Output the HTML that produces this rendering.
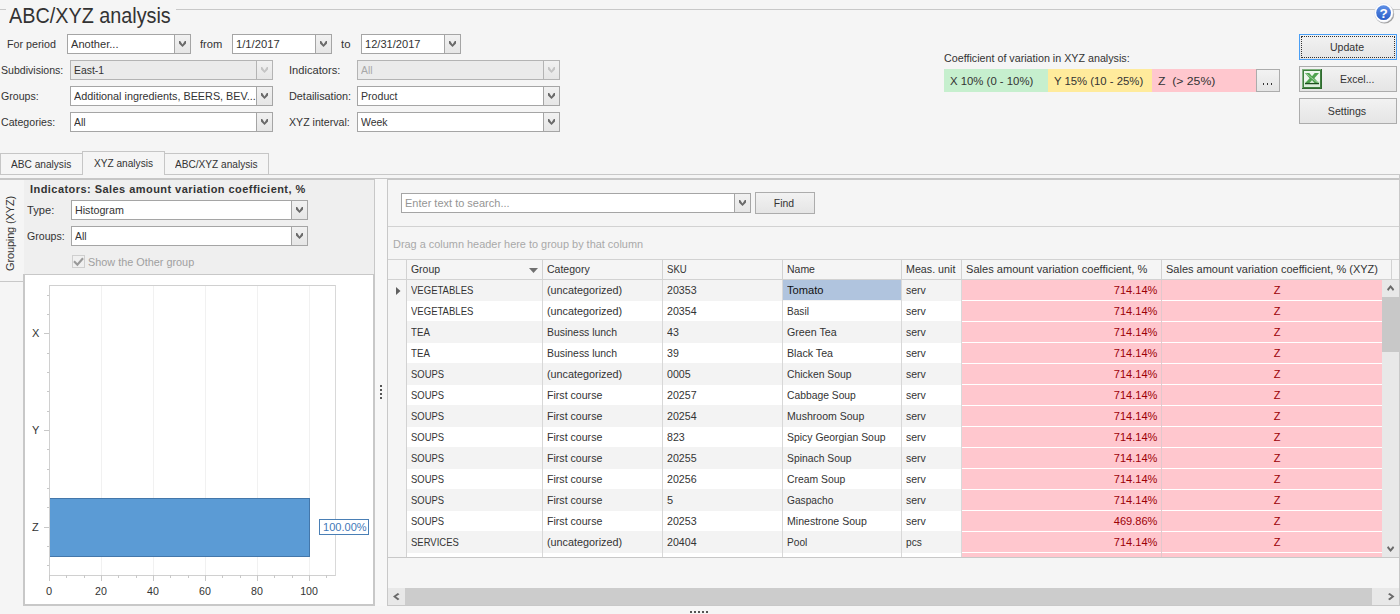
<!DOCTYPE html>
<html><head><meta charset="utf-8"><style>
html,body{margin:0;padding:0;width:1400px;height:614px;overflow:hidden;background:#f5f5f5;position:relative}
body div,body svg{position:absolute}
.t{font-family:'Liberation Sans', sans-serif;font-size:11px;line-height:13px;white-space:nowrap;color:#333;transform-origin:0 0}
</style></head><body>
<div style="left:0px;top:9px;width:6px;height:1px;background:#c8c8c8"></div>
<div style="left:176px;top:9px;width:1224px;height:1px;background:#c8c8c8"></div>
<div class="t" style="left:9px;top:3px;font-size:22px;line-height:26px;transform:scaleX(0.9);transform-origin:0 0;color:#333">ABC/XYZ analysis</div>
<svg style="left:1373px;top:2px" width="22" height="22" viewBox="0 0 22 22">
<defs><linearGradient id="hg" x1="0" y1="0" x2="0" y2="1"><stop offset="0" stop-color="#5d8fe6"/><stop offset="1" stop-color="#2b5fc9"/></linearGradient></defs>
<circle cx="11.6" cy="11.9" r="9.6" fill="rgba(0,0,0,0.35)"/>
<circle cx="10.8" cy="10.8" r="9.4" fill="#fff" stroke="#e0e4ee" stroke-width="0.6"/>
<circle cx="10.6" cy="10.7" r="7.4" fill="url(#hg)"/>
<text x="10.6" y="15.6" text-anchor="middle" font-family="Liberation Sans" font-weight="bold" font-size="13.5" fill="#fff">?</text>
</svg>
<div class="t" style="left:7px;top:38px;transform:scaleX(0.9743);">For period</div>
<div style="left:67px;top:34px;width:124px;height:20px;box-sizing:border-box;border:1px solid #a5a5a5;background:#fff"></div>
<div style="left:174px;top:35px;width:16px;height:18px;box-sizing:border-box;border-left:1px solid #a5a5a5;background:linear-gradient(#f1f1f1,#e6e6e6)"></div>
<svg style="left:179px;top:41px" width="8" height="7" viewBox="0 0 8 7"><path d="M0 0 L1.2 0 L3.5 3.6 L5.8 0 L7 0 L7 2.4 L3.5 6 L0 2.4 Z" fill="#6a6a6a"/></svg>
<div class="t" style="left:71px;top:38px;transform:scaleX(1.0081);color:#333">Another...</div>
<div class="t" style="left:200px;top:38px;transform:scaleX(1.0150);">from</div>
<div style="left:232px;top:34px;width:100px;height:20px;box-sizing:border-box;border:1px solid #a5a5a5;background:#fff"></div>
<div style="left:315px;top:35px;width:16px;height:18px;box-sizing:border-box;border-left:1px solid #a5a5a5;background:linear-gradient(#f1f1f1,#e6e6e6)"></div>
<svg style="left:320px;top:41px" width="8" height="7" viewBox="0 0 8 7"><path d="M0 0 L1.2 0 L3.5 3.6 L5.8 0 L7 0 L7 2.4 L3.5 6 L0 2.4 Z" fill="#6a6a6a"/></svg>
<div class="t" style="left:236px;top:38px;transform:scaleX(1.0204);color:#333">1/1/2017</div>
<div class="t" style="left:341px;top:38px;transform:scaleX(1.0343);">to</div>
<div style="left:361px;top:34px;width:100px;height:20px;box-sizing:border-box;border:1px solid #a5a5a5;background:#fff"></div>
<div style="left:444px;top:35px;width:16px;height:18px;box-sizing:border-box;border-left:1px solid #a5a5a5;background:linear-gradient(#f1f1f1,#e6e6e6)"></div>
<svg style="left:449px;top:41px" width="8" height="7" viewBox="0 0 8 7"><path d="M0 0 L1.2 0 L3.5 3.6 L5.8 0 L7 0 L7 2.4 L3.5 6 L0 2.4 Z" fill="#6a6a6a"/></svg>
<div class="t" style="left:365px;top:38px;transform:scaleX(1.0083);color:#333">12/31/2017</div>
<div class="t" style="left:1px;top:64px;transform:scaleX(0.9613);">Subdivisions:</div>
<div style="left:70px;top:60px;width:203px;height:20px;box-sizing:border-box;border:1px solid #b4b4b4;background:#ebebeb"></div>
<div style="left:256px;top:61px;width:16px;height:18px;box-sizing:border-box;border-left:1px solid #b4b4b4;background:linear-gradient(#f1f1f1,#e6e6e6)"></div>
<svg style="left:261px;top:67px" width="8" height="7" viewBox="0 0 8 7"><path d="M0 0 L1.2 0 L3.5 3.6 L5.8 0 L7 0 L7 2.4 L3.5 6 L0 2.4 Z" fill="#c4c4c4"/></svg>
<div class="t" style="left:74px;top:64px;transform:scaleX(0.9445);color:#333">East-1</div>
<div class="t" style="left:289px;top:64px;transform:scaleX(1.0105);">Indicators:</div>
<div style="left:357px;top:60px;width:203px;height:20px;box-sizing:border-box;border:1px solid #b4b4b4;background:#ebebeb"></div>
<div style="left:543px;top:61px;width:16px;height:18px;box-sizing:border-box;border-left:1px solid #b4b4b4;background:linear-gradient(#f1f1f1,#e6e6e6)"></div>
<svg style="left:548px;top:67px" width="8" height="7" viewBox="0 0 8 7"><path d="M0 0 L1.2 0 L3.5 3.6 L5.8 0 L7 0 L7 2.4 L3.5 6 L0 2.4 Z" fill="#c4c4c4"/></svg>
<div class="t" style="left:361px;top:64px;transform:scaleX(0.9391);color:#a8a8a8">All</div>
<div class="t" style="left:1px;top:90px;transform:scaleX(0.9630);">Groups:</div>
<div style="left:70px;top:86px;width:203px;height:20px;box-sizing:border-box;border:1px solid #a5a5a5;background:#fff"></div>
<div style="left:256px;top:87px;width:16px;height:18px;box-sizing:border-box;border-left:1px solid #a5a5a5;background:linear-gradient(#f1f1f1,#e6e6e6)"></div>
<svg style="left:261px;top:93px" width="8" height="7" viewBox="0 0 8 7"><path d="M0 0 L1.2 0 L3.5 3.6 L5.8 0 L7 0 L7 2.4 L3.5 6 L0 2.4 Z" fill="#6a6a6a"/></svg>
<div class="t" style="left:74px;top:90px;transform:scaleX(0.9832);color:#333">Additional ingredients, BEERS, BEV...</div>
<div class="t" style="left:289px;top:90px;transform:scaleX(0.9867);">Detailisation:</div>
<div style="left:357px;top:86px;width:203px;height:20px;box-sizing:border-box;border:1px solid #a5a5a5;background:#fff"></div>
<div style="left:543px;top:87px;width:16px;height:18px;box-sizing:border-box;border-left:1px solid #a5a5a5;background:linear-gradient(#f1f1f1,#e6e6e6)"></div>
<svg style="left:548px;top:93px" width="8" height="7" viewBox="0 0 8 7"><path d="M0 0 L1.2 0 L3.5 3.6 L5.8 0 L7 0 L7 2.4 L3.5 6 L0 2.4 Z" fill="#6a6a6a"/></svg>
<div class="t" style="left:361px;top:90px;transform:scaleX(0.9633);color:#333">Product</div>
<div class="t" style="left:1px;top:116px;transform:scaleX(0.9622);">Categories:</div>
<div style="left:70px;top:112px;width:203px;height:20px;box-sizing:border-box;border:1px solid #a5a5a5;background:#fff"></div>
<div style="left:256px;top:113px;width:16px;height:18px;box-sizing:border-box;border-left:1px solid #a5a5a5;background:linear-gradient(#f1f1f1,#e6e6e6)"></div>
<svg style="left:261px;top:119px" width="8" height="7" viewBox="0 0 8 7"><path d="M0 0 L1.2 0 L3.5 3.6 L5.8 0 L7 0 L7 2.4 L3.5 6 L0 2.4 Z" fill="#6a6a6a"/></svg>
<div class="t" style="left:74px;top:116px;transform:scaleX(0.9391);color:#333">All</div>
<div class="t" style="left:289px;top:116px;transform:scaleX(0.9638);">XYZ interval:</div>
<div style="left:357px;top:112px;width:203px;height:20px;box-sizing:border-box;border:1px solid #a5a5a5;background:#fff"></div>
<div style="left:543px;top:113px;width:16px;height:18px;box-sizing:border-box;border-left:1px solid #a5a5a5;background:linear-gradient(#f1f1f1,#e6e6e6)"></div>
<svg style="left:548px;top:119px" width="8" height="7" viewBox="0 0 8 7"><path d="M0 0 L1.2 0 L3.5 3.6 L5.8 0 L7 0 L7 2.4 L3.5 6 L0 2.4 Z" fill="#6a6a6a"/></svg>
<div class="t" style="left:361px;top:116px;transform:scaleX(0.9507);color:#333">Week</div>
<div class="t" style="left:944px;top:52px;transform:scaleX(0.9743);">Coefficient of variation in XYZ analysis:</div>
<div style="left:944px;top:69px;width:104px;height:23px;background:#c6efce"></div>
<div style="left:1048px;top:69px;width:104px;height:23px;background:#ffeb9c"></div>
<div style="left:1152px;top:69px;width:104px;height:23px;background:#ffc7ce"></div>
<div class="t" style="left:950px;top:75px;transform:scaleX(1.0321);">X 10% (0 - 10%)</div>
<div class="t" style="left:1054px;top:75px;transform:scaleX(1.0292);">Y 15% (10 - 25%)</div>
<div class="t" style="left:1158px;top:75px;transform:scaleX(1.1093);">Z &nbsp;(&gt; 25%)</div>
<div style="left:1256px;top:69px;width:24px;height:23px;box-sizing:border-box;border:1px solid #acacac;background:linear-gradient(#f2f2f2,#e5e5e5)"></div>
<div class="t" style="left:1255px;width:24px;text-align:center;top:74px;transform-origin:50% 0;"></div>
<div style="left:1263px;top:83px;width:1px;height:2px;background:#333"></div>
<div style="left:1267px;top:83px;width:1px;height:2px;background:#333"></div>
<div style="left:1271px;top:83px;width:1px;height:2px;background:#333"></div>
<div style="left:1299px;top:34px;width:98px;height:26px;box-sizing:border-box;border:1px solid #4a9ff5;background:linear-gradient(#f2f2f2,#e5e5e5)"></div>
<div style="left:1301px;top:36px;width:94px;height:22px;box-sizing:border-box;border:1px dotted #333"></div>
<div class="t" style="left:1298px;width:98px;text-align:center;top:41px;transform-origin:50% 0;transform:scaleX(0.9632);">Update</div>
<div style="left:1299px;top:66px;width:98px;height:26px;box-sizing:border-box;border:1px solid #acacac;background:linear-gradient(#f2f2f2,#e5e5e5)"></div>
<div class="t" style="left:1340px;top:73px;transform:scaleX(0.9528);">Excel...</div>
<div style="left:1299px;top:98px;width:98px;height:26px;box-sizing:border-box;border:1px solid #acacac;background:linear-gradient(#f2f2f2,#e5e5e5)"></div>
<div class="t" style="left:1298px;width:98px;text-align:center;top:105px;transform-origin:50% 0;transform:scaleX(0.9634);">Settings</div>
<svg style="left:1302px;top:69px" width="20" height="20" viewBox="0 0 20 20">
<rect x="0" y="0" width="20" height="20" fill="#2f6a2f"/>
<rect x="0" y="0" width="19" height="19" fill="#7fb27f"/>
<rect x="1" y="1" width="18" height="18" fill="#3f7f3f"/>
<rect x="2" y="2" width="16" height="16" fill="#eef6ee"/>
<rect x="2" y="12" width="16" height="6" fill="#dcefdc"/>
<path d="M3 4 L7.3 4 L10 7.3 L12.7 4 L17 4 L12.4 9.3 L17 14.3 L12.7 14.3 L10 11.3 L7.3 14.3 L3 14.3 L7.6 9.3 Z" fill="#4fa34f"/>
<path d="M3 14.6 L17 14.6" stroke="#1d4f1d" stroke-width="1.3"/>
<path d="M4.2 4.6 L15.6 13.6" stroke="#b5ddb5" stroke-width="0.8"/>
</svg>
<div style="left:0px;top:178px;width:1400px;height:1px;background:#c6c6c6"></div>
<div style="left:0px;top:179px;width:375px;height:1px;background:#c6c6c6"></div>
<div style="left:387px;top:179px;width:1013px;height:1px;background:#c6c6c6"></div>
<div style="left:0px;top:174px;width:1400px;height:1px;background:#c8c8c8"></div>
<div style="left:1399px;top:174px;width:1px;height:432px;background:#c8c8c8"></div>
<div style="left:0px;top:153px;width:83px;height:22px;box-sizing:border-box;border:1px solid #c6c6c6;background:#f5f5f5"></div>
<div style="left:164px;top:153px;width:105px;height:22px;box-sizing:border-box;border:1px solid #c6c6c6;background:#f5f5f5"></div>
<div style="left:82px;top:151px;width:83px;height:24px;box-sizing:border-box;border:1px solid #c6c6c6;border-bottom:none;background:#f5f5f5"></div>
<div class="t" style="left:11px;top:158px;transform:scaleX(0.9209);">ABC analysis</div>
<div class="t" style="left:94px;top:157px;transform:scaleX(0.9190);">XYZ analysis</div>
<div class="t" style="left:175px;top:158px;transform:scaleX(0.9184);">ABC/XYZ analysis</div>
<div style="left:24px;top:180px;width:350px;height:94px;background:#efefef"></div>
<div style="left:0px;top:281px;width:23px;height:1px;background:#c8c8c8"></div>
<div class="t" style="left:-35px;top:227px;width:90px;text-align:center;letter-spacing:-0.15px;transform:rotate(-90deg);transform-origin:50% 50%;">Grouping (XYZ)</div>
<div class="t" style="left:30px;top:183px;font-weight:bold;letter-spacing:0.45px">Indicators: Sales amount variation coefficient, %</div>
<div class="t" style="left:27px;top:204px;transform:scaleX(1.0118);">Type:</div>
<div style="left:71px;top:200px;width:237px;height:20px;box-sizing:border-box;border:1px solid #a5a5a5;background:#fff"></div>
<div style="left:291px;top:201px;width:16px;height:18px;box-sizing:border-box;border-left:1px solid #a5a5a5;background:linear-gradient(#f1f1f1,#e6e6e6)"></div>
<svg style="left:296px;top:207px" width="8" height="7" viewBox="0 0 8 7"><path d="M0 0 L1.2 0 L3.5 3.6 L5.8 0 L7 0 L7 2.4 L3.5 6 L0 2.4 Z" fill="#6a6a6a"/></svg>
<div class="t" style="left:75px;top:204px;transform:scaleX(0.9742);color:#333">Histogram</div>
<div class="t" style="left:27px;top:230px;transform:scaleX(0.9630);">Groups:</div>
<div style="left:71px;top:226px;width:237px;height:20px;box-sizing:border-box;border:1px solid #a5a5a5;background:#fff"></div>
<div style="left:291px;top:227px;width:16px;height:18px;box-sizing:border-box;border-left:1px solid #a5a5a5;background:linear-gradient(#f1f1f1,#e6e6e6)"></div>
<svg style="left:296px;top:233px" width="8" height="7" viewBox="0 0 8 7"><path d="M0 0 L1.2 0 L3.5 3.6 L5.8 0 L7 0 L7 2.4 L3.5 6 L0 2.4 Z" fill="#6a6a6a"/></svg>
<div class="t" style="left:75px;top:230px;transform:scaleX(0.9391);color:#333">All</div>
<div style="left:72px;top:255px;width:13px;height:13px;box-sizing:border-box;border:1px solid #cfcfcf;background:#f0f0f0"></div>
<svg style="left:73px;top:256px" width="11" height="11" viewBox="0 0 11 11"><path d="M1 5.2 L4.4 8.8 L10 2.2" stroke="#9a9a9a" stroke-width="2.1" fill="none"/></svg>
<div class="t" style="left:88px;top:256px;transform:scaleX(0.9865);color:#a0a0a0">Show the Other group</div>
<div style="left:23px;top:274px;width:352px;height:332px;box-sizing:border-box;border:1px solid #c8c8c8;border-left:2px solid #c8c8c8;border-bottom:2px solid #c8c8c8;border-right:2px solid #c8c8c8;background:#fff"></div>
<div style="left:49px;top:285px;width:287px;height:291px;box-sizing:border-box;border:1px solid #d0d0d0;border-right:1px solid #d9d9d9"></div>
<div style="left:101px;top:286px;width:1px;height:289px;background:#f1f1f1"></div>
<div style="left:153px;top:286px;width:1px;height:289px;background:#f1f1f1"></div>
<div style="left:205px;top:286px;width:1px;height:289px;background:#f1f1f1"></div>
<div style="left:257px;top:286px;width:1px;height:289px;background:#f1f1f1"></div>
<div style="left:309px;top:286px;width:1px;height:289px;background:#f1f1f1"></div>
<div style="left:47px;top:295px;width:2px;height:1px;background:#c8c8c8"></div>
<div style="left:47px;top:314px;width:2px;height:1px;background:#c8c8c8"></div>
<div style="left:44px;top:333px;width:5px;height:1px;background:#c8c8c8"></div>
<div style="left:47px;top:353px;width:2px;height:1px;background:#c8c8c8"></div>
<div style="left:47px;top:372px;width:2px;height:1px;background:#c8c8c8"></div>
<div style="left:47px;top:391px;width:2px;height:1px;background:#c8c8c8"></div>
<div style="left:47px;top:411px;width:2px;height:1px;background:#c8c8c8"></div>
<div style="left:44px;top:430px;width:5px;height:1px;background:#c8c8c8"></div>
<div style="left:47px;top:449px;width:2px;height:1px;background:#c8c8c8"></div>
<div style="left:47px;top:469px;width:2px;height:1px;background:#c8c8c8"></div>
<div style="left:47px;top:488px;width:2px;height:1px;background:#c8c8c8"></div>
<div style="left:47px;top:507px;width:2px;height:1px;background:#c8c8c8"></div>
<div style="left:44px;top:527px;width:5px;height:1px;background:#c8c8c8"></div>
<div style="left:47px;top:546px;width:2px;height:1px;background:#c8c8c8"></div>
<div style="left:47px;top:565px;width:2px;height:1px;background:#c8c8c8"></div>
<div class="t" style="left:32px;top:327px;">X</div>
<div class="t" style="left:32px;top:424px;">Y</div>
<div class="t" style="left:32px;top:521px;">Z</div>
<div style="left:49px;top:575px;width:1px;height:6px;background:#c8c8c8"></div>
<div style="left:66px;top:575px;width:1px;height:3px;background:#c8c8c8"></div>
<div style="left:84px;top:575px;width:1px;height:3px;background:#c8c8c8"></div>
<div style="left:101px;top:575px;width:1px;height:6px;background:#c8c8c8"></div>
<div style="left:118px;top:575px;width:1px;height:3px;background:#c8c8c8"></div>
<div style="left:136px;top:575px;width:1px;height:3px;background:#c8c8c8"></div>
<div style="left:153px;top:575px;width:1px;height:6px;background:#c8c8c8"></div>
<div style="left:170px;top:575px;width:1px;height:3px;background:#c8c8c8"></div>
<div style="left:188px;top:575px;width:1px;height:3px;background:#c8c8c8"></div>
<div style="left:205px;top:575px;width:1px;height:6px;background:#c8c8c8"></div>
<div style="left:222px;top:575px;width:1px;height:3px;background:#c8c8c8"></div>
<div style="left:240px;top:575px;width:1px;height:3px;background:#c8c8c8"></div>
<div style="left:257px;top:575px;width:1px;height:6px;background:#c8c8c8"></div>
<div style="left:274px;top:575px;width:1px;height:3px;background:#c8c8c8"></div>
<div style="left:292px;top:575px;width:1px;height:3px;background:#c8c8c8"></div>
<div style="left:309px;top:575px;width:1px;height:6px;background:#c8c8c8"></div>
<div style="left:326px;top:575px;width:1px;height:3px;background:#c8c8c8"></div>
<div class="t" style="left:29px;width:40px;text-align:center;top:585px;transform-origin:50% 0;">0</div>
<div class="t" style="left:81px;width:40px;text-align:center;top:585px;transform-origin:50% 0;transform:scaleX(0.9659);">20</div>
<div class="t" style="left:133px;width:40px;text-align:center;top:585px;transform-origin:50% 0;transform:scaleX(0.9659);">40</div>
<div class="t" style="left:185px;width:40px;text-align:center;top:585px;transform-origin:50% 0;transform:scaleX(0.9659);">60</div>
<div class="t" style="left:237px;width:40px;text-align:center;top:585px;transform-origin:50% 0;transform:scaleX(0.9659);">80</div>
<div class="t" style="left:289px;width:40px;text-align:center;top:585px;transform-origin:50% 0;transform:scaleX(0.9659);">100</div>
<div style="left:50px;top:498px;width:260px;height:59px;box-sizing:border-box;border:1px solid #4477aa;border-left:none;background:#5b9bd5"></div>
<div style="left:319px;top:519px;width:50px;height:16px;box-sizing:border-box;border:1px solid #4a7fb5;background:#fff"></div>
<div class="t" style="left:323px;top:521px;transform:scaleX(1.0050);color:#3f78b8">100.00%</div>
<div style="left:375px;top:179px;width:12px;height:427px;background:#f7f7f7"></div>
<div style="left:374px;top:180px;width:1px;height:426px;background:#c8c8c8"></div>
<div style="left:387px;top:180px;width:1px;height:426px;background:#c8c8c8"></div>
<div style="left:380px;top:385px;width:2px;height:2px;background:#555"></div>
<div style="left:380px;top:389px;width:2px;height:2px;background:#555"></div>
<div style="left:380px;top:393px;width:2px;height:2px;background:#555"></div>
<div style="left:380px;top:397px;width:2px;height:2px;background:#555"></div>
<div style="left:1399px;top:180px;width:1px;height:426px;background:#c8c8c8"></div>
<div style="left:387px;top:605px;width:1013px;height:1px;background:#c8c8c8"></div>
<div style="left:401px;top:193px;width:350px;height:20px;box-sizing:border-box;border:1px solid #a5a5a5;background:#fff"></div>
<div style="left:734px;top:194px;width:16px;height:18px;box-sizing:border-box;border-left:1px solid #a5a5a5;background:linear-gradient(#f1f1f1,#e6e6e6)"></div>
<svg style="left:739px;top:200px" width="8" height="7" viewBox="0 0 8 7"><path d="M0 0 L1.2 0 L3.5 3.6 L5.8 0 L7 0 L7 2.4 L3.5 6 L0 2.4 Z" fill="#6a6a6a"/></svg>
<div class="t" style="left:405px;top:197px;color:#959595">Enter text to search...</div>
<div style="left:755px;top:192px;width:60px;height:22px;box-sizing:border-box;border:1px solid #acacac;background:linear-gradient(#f2f2f2,#e5e5e5)"></div>
<div class="t" style="left:754px;width:60px;text-align:center;top:197px;transform-origin:50% 0;transform:scaleX(0.9465);">Find</div>
<div style="left:388px;top:226px;width:1011px;height:1px;background:#d2d2d2"></div>
<div class="t" style="left:393px;top:238px;transform:scaleX(0.9926);color:#a9a9a9">Drag a column header here to group by that column</div>
<div style="left:388px;top:259px;width:1011px;height:1px;background:#d2d2d2"></div>
<div style="left:388px;top:279px;width:1011px;height:1px;background:#d2d2d2"></div>
<div style="left:406px;top:260px;width:1px;height:19px;background:#d2d2d2"></div>
<div style="left:542px;top:260px;width:1px;height:19px;background:#d2d2d2"></div>
<div style="left:662px;top:260px;width:1px;height:19px;background:#d2d2d2"></div>
<div style="left:782px;top:260px;width:1px;height:19px;background:#d2d2d2"></div>
<div style="left:901px;top:260px;width:1px;height:19px;background:#d2d2d2"></div>
<div style="left:961px;top:260px;width:1px;height:19px;background:#d2d2d2"></div>
<div style="left:1161px;top:260px;width:1px;height:19px;background:#d2d2d2"></div>
<div style="left:1391px;top:260px;width:1px;height:19px;background:#d2d2d2"></div>
<div class="t" style="left:411px;top:263px;transform:scaleX(0.9491);">Group</div>
<div class="t" style="left:547px;top:263px;transform:scaleX(0.9562);">Category</div>
<div class="t" style="left:667px;top:263px;transform:scaleX(0.8725);">SKU</div>
<div class="t" style="left:787px;top:263px;transform:scaleX(0.9512);">Name</div>
<div class="t" style="left:906px;top:263px;transform:scaleX(0.9729);">Meas. unit</div>
<div class="t" style="left:966px;top:263px;transform:scaleX(1.0064);">Sales amount variation coefficient, %</div>
<div class="t" style="left:1166px;top:263px;">Sales amount variation coefficient, % (XYZ)</div>
<svg style="left:529px;top:268px" width="9" height="5" viewBox="0 0 9 5"><path d="M0 0 L9 0 L4.5 5 Z" fill="#707070"/></svg>
<div style="left:388px;top:280px;width:18px;height:277px;background:#f5f5f5"></div>
<div style="left:406px;top:280px;width:1px;height:277px;background:#d2d2d2"></div>
<div style="left:407px;top:280px;width:555px;height:21px;background:#f3f3f3"></div>
<div style="left:962px;top:280px;width:420px;height:20px;background:#ffc7ce"></div>
<div style="left:962px;top:300px;width:420px;height:1px;background:#fff"></div>
<div style="left:542px;top:280px;width:1px;height:21px;background:#d8d8d8"></div>
<div style="left:662px;top:280px;width:1px;height:21px;background:#d8d8d8"></div>
<div style="left:782px;top:280px;width:1px;height:21px;background:#d8d8d8"></div>
<div style="left:901px;top:280px;width:1px;height:21px;background:#d8d8d8"></div>
<div style="left:961px;top:280px;width:1px;height:21px;background:#d8d8d8"></div>
<div style="left:1161px;top:280px;width:1px;height:21px;background:#e2c8cc"></div>
<div class="t" style="left:411px;top:284px;transform:scaleX(0.8671);">VEGETABLES</div>
<div class="t" style="left:547px;top:284px;transform:scaleX(0.9828);">(uncategorized)</div>
<div class="t" style="left:667px;top:284px;transform:scaleX(0.9659);">20353</div>
<div class="t" style="left:787px;top:284px;transform:scaleX(1.0110);">Tomato</div>
<div class="t" style="left:906px;top:284px;transform:scaleX(0.9541);">serv</div>
<div class="t" style="right:243px;top:284px;transform-origin:100% 0;transform:scaleX(1.0050);color:#9c0006">714.14%</div>
<div class="t" style="left:1257px;width:40px;text-align:center;top:284px;transform-origin:50% 0;color:#9c0006">Z</div>
<div style="left:407px;top:301px;width:555px;height:21px;background:#f3f3f3"></div>
<div style="left:407px;top:301px;width:555px;height:20px;background:#ffffff"></div>
<div style="left:962px;top:301px;width:420px;height:20px;background:#ffc7ce"></div>
<div style="left:962px;top:321px;width:420px;height:1px;background:#fff"></div>
<div style="left:542px;top:301px;width:1px;height:21px;background:#d8d8d8"></div>
<div style="left:662px;top:301px;width:1px;height:21px;background:#d8d8d8"></div>
<div style="left:782px;top:301px;width:1px;height:21px;background:#d8d8d8"></div>
<div style="left:901px;top:301px;width:1px;height:21px;background:#d8d8d8"></div>
<div style="left:961px;top:301px;width:1px;height:21px;background:#d8d8d8"></div>
<div style="left:1161px;top:301px;width:1px;height:21px;background:#e2c8cc"></div>
<div class="t" style="left:411px;top:305px;transform:scaleX(0.8671);">VEGETABLES</div>
<div class="t" style="left:547px;top:305px;transform:scaleX(0.9828);">(uncategorized)</div>
<div class="t" style="left:667px;top:305px;transform:scaleX(0.9659);">20354</div>
<div class="t" style="left:787px;top:305px;transform:scaleX(0.9175);">Basil</div>
<div class="t" style="left:906px;top:305px;transform:scaleX(0.9541);">serv</div>
<div class="t" style="right:243px;top:305px;transform-origin:100% 0;transform:scaleX(1.0050);color:#9c0006">714.14%</div>
<div class="t" style="left:1257px;width:40px;text-align:center;top:305px;transform-origin:50% 0;color:#9c0006">Z</div>
<div style="left:407px;top:322px;width:555px;height:21px;background:#f3f3f3"></div>
<div style="left:962px;top:322px;width:420px;height:20px;background:#ffc7ce"></div>
<div style="left:962px;top:342px;width:420px;height:1px;background:#fff"></div>
<div style="left:542px;top:322px;width:1px;height:21px;background:#d8d8d8"></div>
<div style="left:662px;top:322px;width:1px;height:21px;background:#d8d8d8"></div>
<div style="left:782px;top:322px;width:1px;height:21px;background:#d8d8d8"></div>
<div style="left:901px;top:322px;width:1px;height:21px;background:#d8d8d8"></div>
<div style="left:961px;top:322px;width:1px;height:21px;background:#d8d8d8"></div>
<div style="left:1161px;top:322px;width:1px;height:21px;background:#e2c8cc"></div>
<div class="t" style="left:411px;top:326px;transform:scaleX(0.8812);">TEA</div>
<div class="t" style="left:547px;top:326px;transform:scaleX(0.9478);">Business lunch</div>
<div class="t" style="left:667px;top:326px;transform:scaleX(0.9659);">43</div>
<div class="t" style="left:787px;top:326px;transform:scaleX(0.9698);">Green Tea</div>
<div class="t" style="left:906px;top:326px;transform:scaleX(0.9541);">serv</div>
<div class="t" style="right:243px;top:326px;transform-origin:100% 0;transform:scaleX(1.0050);color:#9c0006">714.14%</div>
<div class="t" style="left:1257px;width:40px;text-align:center;top:326px;transform-origin:50% 0;color:#9c0006">Z</div>
<div style="left:407px;top:343px;width:555px;height:21px;background:#f3f3f3"></div>
<div style="left:407px;top:343px;width:555px;height:20px;background:#ffffff"></div>
<div style="left:962px;top:343px;width:420px;height:20px;background:#ffc7ce"></div>
<div style="left:962px;top:363px;width:420px;height:1px;background:#fff"></div>
<div style="left:542px;top:343px;width:1px;height:21px;background:#d8d8d8"></div>
<div style="left:662px;top:343px;width:1px;height:21px;background:#d8d8d8"></div>
<div style="left:782px;top:343px;width:1px;height:21px;background:#d8d8d8"></div>
<div style="left:901px;top:343px;width:1px;height:21px;background:#d8d8d8"></div>
<div style="left:961px;top:343px;width:1px;height:21px;background:#d8d8d8"></div>
<div style="left:1161px;top:343px;width:1px;height:21px;background:#e2c8cc"></div>
<div class="t" style="left:411px;top:347px;transform:scaleX(0.8812);">TEA</div>
<div class="t" style="left:547px;top:347px;transform:scaleX(0.9478);">Business lunch</div>
<div class="t" style="left:667px;top:347px;transform:scaleX(0.9659);">39</div>
<div class="t" style="left:787px;top:347px;transform:scaleX(0.9691);">Black Tea</div>
<div class="t" style="left:906px;top:347px;transform:scaleX(0.9541);">serv</div>
<div class="t" style="right:243px;top:347px;transform-origin:100% 0;transform:scaleX(1.0050);color:#9c0006">714.14%</div>
<div class="t" style="left:1257px;width:40px;text-align:center;top:347px;transform-origin:50% 0;color:#9c0006">Z</div>
<div style="left:407px;top:364px;width:555px;height:21px;background:#f3f3f3"></div>
<div style="left:962px;top:364px;width:420px;height:20px;background:#ffc7ce"></div>
<div style="left:962px;top:384px;width:420px;height:1px;background:#fff"></div>
<div style="left:542px;top:364px;width:1px;height:21px;background:#d8d8d8"></div>
<div style="left:662px;top:364px;width:1px;height:21px;background:#d8d8d8"></div>
<div style="left:782px;top:364px;width:1px;height:21px;background:#d8d8d8"></div>
<div style="left:901px;top:364px;width:1px;height:21px;background:#d8d8d8"></div>
<div style="left:961px;top:364px;width:1px;height:21px;background:#d8d8d8"></div>
<div style="left:1161px;top:364px;width:1px;height:21px;background:#e2c8cc"></div>
<div class="t" style="left:411px;top:368px;transform:scaleX(0.8574);">SOUPS</div>
<div class="t" style="left:547px;top:368px;transform:scaleX(0.9828);">(uncategorized)</div>
<div class="t" style="left:667px;top:368px;transform:scaleX(0.9659);">0005</div>
<div class="t" style="left:787px;top:368px;transform:scaleX(0.9417);">Chicken Soup</div>
<div class="t" style="left:906px;top:368px;transform:scaleX(0.9541);">serv</div>
<div class="t" style="right:243px;top:368px;transform-origin:100% 0;transform:scaleX(1.0050);color:#9c0006">714.14%</div>
<div class="t" style="left:1257px;width:40px;text-align:center;top:368px;transform-origin:50% 0;color:#9c0006">Z</div>
<div style="left:407px;top:385px;width:555px;height:21px;background:#f3f3f3"></div>
<div style="left:407px;top:385px;width:555px;height:20px;background:#ffffff"></div>
<div style="left:962px;top:385px;width:420px;height:20px;background:#ffc7ce"></div>
<div style="left:962px;top:405px;width:420px;height:1px;background:#fff"></div>
<div style="left:542px;top:385px;width:1px;height:21px;background:#d8d8d8"></div>
<div style="left:662px;top:385px;width:1px;height:21px;background:#d8d8d8"></div>
<div style="left:782px;top:385px;width:1px;height:21px;background:#d8d8d8"></div>
<div style="left:901px;top:385px;width:1px;height:21px;background:#d8d8d8"></div>
<div style="left:961px;top:385px;width:1px;height:21px;background:#d8d8d8"></div>
<div style="left:1161px;top:385px;width:1px;height:21px;background:#e2c8cc"></div>
<div class="t" style="left:411px;top:389px;transform:scaleX(0.8574);">SOUPS</div>
<div class="t" style="left:547px;top:389px;transform:scaleX(0.9627);">First course</div>
<div class="t" style="left:667px;top:389px;transform:scaleX(0.9659);">20257</div>
<div class="t" style="left:787px;top:389px;transform:scaleX(0.9381);">Cabbage Soup</div>
<div class="t" style="left:906px;top:389px;transform:scaleX(0.9541);">serv</div>
<div class="t" style="right:243px;top:389px;transform-origin:100% 0;transform:scaleX(1.0050);color:#9c0006">714.14%</div>
<div class="t" style="left:1257px;width:40px;text-align:center;top:389px;transform-origin:50% 0;color:#9c0006">Z</div>
<div style="left:407px;top:406px;width:555px;height:21px;background:#f3f3f3"></div>
<div style="left:962px;top:406px;width:420px;height:20px;background:#ffc7ce"></div>
<div style="left:962px;top:426px;width:420px;height:1px;background:#fff"></div>
<div style="left:542px;top:406px;width:1px;height:21px;background:#d8d8d8"></div>
<div style="left:662px;top:406px;width:1px;height:21px;background:#d8d8d8"></div>
<div style="left:782px;top:406px;width:1px;height:21px;background:#d8d8d8"></div>
<div style="left:901px;top:406px;width:1px;height:21px;background:#d8d8d8"></div>
<div style="left:961px;top:406px;width:1px;height:21px;background:#d8d8d8"></div>
<div style="left:1161px;top:406px;width:1px;height:21px;background:#e2c8cc"></div>
<div class="t" style="left:411px;top:410px;transform:scaleX(0.8574);">SOUPS</div>
<div class="t" style="left:547px;top:410px;transform:scaleX(0.9627);">First course</div>
<div class="t" style="left:667px;top:410px;transform:scaleX(0.9659);">20254</div>
<div class="t" style="left:787px;top:410px;transform:scaleX(0.9582);">Mushroom Soup</div>
<div class="t" style="left:906px;top:410px;transform:scaleX(0.9541);">serv</div>
<div class="t" style="right:243px;top:410px;transform-origin:100% 0;transform:scaleX(1.0050);color:#9c0006">714.14%</div>
<div class="t" style="left:1257px;width:40px;text-align:center;top:410px;transform-origin:50% 0;color:#9c0006">Z</div>
<div style="left:407px;top:427px;width:555px;height:21px;background:#f3f3f3"></div>
<div style="left:407px;top:427px;width:555px;height:20px;background:#ffffff"></div>
<div style="left:962px;top:427px;width:420px;height:20px;background:#ffc7ce"></div>
<div style="left:962px;top:447px;width:420px;height:1px;background:#fff"></div>
<div style="left:542px;top:427px;width:1px;height:21px;background:#d8d8d8"></div>
<div style="left:662px;top:427px;width:1px;height:21px;background:#d8d8d8"></div>
<div style="left:782px;top:427px;width:1px;height:21px;background:#d8d8d8"></div>
<div style="left:901px;top:427px;width:1px;height:21px;background:#d8d8d8"></div>
<div style="left:961px;top:427px;width:1px;height:21px;background:#d8d8d8"></div>
<div style="left:1161px;top:427px;width:1px;height:21px;background:#e2c8cc"></div>
<div class="t" style="left:411px;top:431px;transform:scaleX(0.8574);">SOUPS</div>
<div class="t" style="left:547px;top:431px;transform:scaleX(0.9627);">First course</div>
<div class="t" style="left:667px;top:431px;transform:scaleX(0.9659);">823</div>
<div class="t" style="left:787px;top:431px;transform:scaleX(0.9473);">Spicy Georgian Soup</div>
<div class="t" style="left:906px;top:431px;transform:scaleX(0.9541);">serv</div>
<div class="t" style="right:243px;top:431px;transform-origin:100% 0;transform:scaleX(1.0050);color:#9c0006">714.14%</div>
<div class="t" style="left:1257px;width:40px;text-align:center;top:431px;transform-origin:50% 0;color:#9c0006">Z</div>
<div style="left:407px;top:448px;width:555px;height:21px;background:#f3f3f3"></div>
<div style="left:962px;top:448px;width:420px;height:20px;background:#ffc7ce"></div>
<div style="left:962px;top:468px;width:420px;height:1px;background:#fff"></div>
<div style="left:542px;top:448px;width:1px;height:21px;background:#d8d8d8"></div>
<div style="left:662px;top:448px;width:1px;height:21px;background:#d8d8d8"></div>
<div style="left:782px;top:448px;width:1px;height:21px;background:#d8d8d8"></div>
<div style="left:901px;top:448px;width:1px;height:21px;background:#d8d8d8"></div>
<div style="left:961px;top:448px;width:1px;height:21px;background:#d8d8d8"></div>
<div style="left:1161px;top:448px;width:1px;height:21px;background:#e2c8cc"></div>
<div class="t" style="left:411px;top:452px;transform:scaleX(0.8574);">SOUPS</div>
<div class="t" style="left:547px;top:452px;transform:scaleX(0.9627);">First course</div>
<div class="t" style="left:667px;top:452px;transform:scaleX(0.9659);">20255</div>
<div class="t" style="left:787px;top:452px;transform:scaleX(0.9427);">Spinach Soup</div>
<div class="t" style="left:906px;top:452px;transform:scaleX(0.9541);">serv</div>
<div class="t" style="right:243px;top:452px;transform-origin:100% 0;transform:scaleX(1.0050);color:#9c0006">714.14%</div>
<div class="t" style="left:1257px;width:40px;text-align:center;top:452px;transform-origin:50% 0;color:#9c0006">Z</div>
<div style="left:407px;top:469px;width:555px;height:21px;background:#f3f3f3"></div>
<div style="left:407px;top:469px;width:555px;height:20px;background:#ffffff"></div>
<div style="left:962px;top:469px;width:420px;height:20px;background:#ffc7ce"></div>
<div style="left:962px;top:489px;width:420px;height:1px;background:#fff"></div>
<div style="left:542px;top:469px;width:1px;height:21px;background:#d8d8d8"></div>
<div style="left:662px;top:469px;width:1px;height:21px;background:#d8d8d8"></div>
<div style="left:782px;top:469px;width:1px;height:21px;background:#d8d8d8"></div>
<div style="left:901px;top:469px;width:1px;height:21px;background:#d8d8d8"></div>
<div style="left:961px;top:469px;width:1px;height:21px;background:#d8d8d8"></div>
<div style="left:1161px;top:469px;width:1px;height:21px;background:#e2c8cc"></div>
<div class="t" style="left:411px;top:473px;transform:scaleX(0.8574);">SOUPS</div>
<div class="t" style="left:547px;top:473px;transform:scaleX(0.9627);">First course</div>
<div class="t" style="left:667px;top:473px;transform:scaleX(0.9659);">20256</div>
<div class="t" style="left:787px;top:473px;transform:scaleX(0.9430);">Cream Soup</div>
<div class="t" style="left:906px;top:473px;transform:scaleX(0.9541);">serv</div>
<div class="t" style="right:243px;top:473px;transform-origin:100% 0;transform:scaleX(1.0050);color:#9c0006">714.14%</div>
<div class="t" style="left:1257px;width:40px;text-align:center;top:473px;transform-origin:50% 0;color:#9c0006">Z</div>
<div style="left:407px;top:490px;width:555px;height:21px;background:#f3f3f3"></div>
<div style="left:962px;top:490px;width:420px;height:20px;background:#ffc7ce"></div>
<div style="left:962px;top:510px;width:420px;height:1px;background:#fff"></div>
<div style="left:542px;top:490px;width:1px;height:21px;background:#d8d8d8"></div>
<div style="left:662px;top:490px;width:1px;height:21px;background:#d8d8d8"></div>
<div style="left:782px;top:490px;width:1px;height:21px;background:#d8d8d8"></div>
<div style="left:901px;top:490px;width:1px;height:21px;background:#d8d8d8"></div>
<div style="left:961px;top:490px;width:1px;height:21px;background:#d8d8d8"></div>
<div style="left:1161px;top:490px;width:1px;height:21px;background:#e2c8cc"></div>
<div class="t" style="left:411px;top:494px;transform:scaleX(0.8574);">SOUPS</div>
<div class="t" style="left:547px;top:494px;transform:scaleX(0.9627);">First course</div>
<div class="t" style="left:667px;top:494px;">5</div>
<div class="t" style="left:787px;top:494px;transform:scaleX(0.9234);">Gaspacho</div>
<div class="t" style="left:906px;top:494px;transform:scaleX(0.9541);">serv</div>
<div class="t" style="right:243px;top:494px;transform-origin:100% 0;transform:scaleX(1.0050);color:#9c0006">714.14%</div>
<div class="t" style="left:1257px;width:40px;text-align:center;top:494px;transform-origin:50% 0;color:#9c0006">Z</div>
<div style="left:407px;top:511px;width:555px;height:21px;background:#f3f3f3"></div>
<div style="left:407px;top:511px;width:555px;height:20px;background:#ffffff"></div>
<div style="left:962px;top:511px;width:420px;height:20px;background:#ffc7ce"></div>
<div style="left:962px;top:531px;width:420px;height:1px;background:#fff"></div>
<div style="left:542px;top:511px;width:1px;height:21px;background:#d8d8d8"></div>
<div style="left:662px;top:511px;width:1px;height:21px;background:#d8d8d8"></div>
<div style="left:782px;top:511px;width:1px;height:21px;background:#d8d8d8"></div>
<div style="left:901px;top:511px;width:1px;height:21px;background:#d8d8d8"></div>
<div style="left:961px;top:511px;width:1px;height:21px;background:#d8d8d8"></div>
<div style="left:1161px;top:511px;width:1px;height:21px;background:#e2c8cc"></div>
<div class="t" style="left:411px;top:515px;transform:scaleX(0.8574);">SOUPS</div>
<div class="t" style="left:547px;top:515px;transform:scaleX(0.9627);">First course</div>
<div class="t" style="left:667px;top:515px;transform:scaleX(0.9659);">20253</div>
<div class="t" style="left:787px;top:515px;transform:scaleX(0.9600);">Minestrone Soup</div>
<div class="t" style="left:906px;top:515px;transform:scaleX(0.9541);">serv</div>
<div class="t" style="right:243px;top:515px;transform-origin:100% 0;transform:scaleX(1.0050);color:#9c0006">469.86%</div>
<div class="t" style="left:1257px;width:40px;text-align:center;top:515px;transform-origin:50% 0;color:#9c0006">Z</div>
<div style="left:407px;top:532px;width:555px;height:21px;background:#f3f3f3"></div>
<div style="left:962px;top:532px;width:420px;height:20px;background:#ffc7ce"></div>
<div style="left:962px;top:552px;width:420px;height:1px;background:#fff"></div>
<div style="left:542px;top:532px;width:1px;height:21px;background:#d8d8d8"></div>
<div style="left:662px;top:532px;width:1px;height:21px;background:#d8d8d8"></div>
<div style="left:782px;top:532px;width:1px;height:21px;background:#d8d8d8"></div>
<div style="left:901px;top:532px;width:1px;height:21px;background:#d8d8d8"></div>
<div style="left:961px;top:532px;width:1px;height:21px;background:#d8d8d8"></div>
<div style="left:1161px;top:532px;width:1px;height:21px;background:#e2c8cc"></div>
<div class="t" style="left:411px;top:536px;transform:scaleX(0.8623);">SERVICES</div>
<div class="t" style="left:547px;top:536px;transform:scaleX(0.9828);">(uncategorized)</div>
<div class="t" style="left:667px;top:536px;transform:scaleX(0.9659);">20404</div>
<div class="t" style="left:787px;top:536px;transform:scaleX(0.9241);">Pool</div>
<div class="t" style="left:906px;top:536px;transform:scaleX(0.9237);">pcs</div>
<div class="t" style="right:243px;top:536px;transform-origin:100% 0;transform:scaleX(1.0050);color:#9c0006">714.14%</div>
<div class="t" style="left:1257px;width:40px;text-align:center;top:536px;transform-origin:50% 0;color:#9c0006">Z</div>
<div style="left:407px;top:553px;width:555px;height:4px;background:#f3f3f3"></div>
<div style="left:407px;top:553px;width:555px;height:4px;background:#ffffff"></div>
<div style="left:962px;top:553px;width:420px;height:4px;background:#ffc7ce"></div>
<div style="left:542px;top:553px;width:1px;height:4px;background:#d8d8d8"></div>
<div style="left:662px;top:553px;width:1px;height:4px;background:#d8d8d8"></div>
<div style="left:782px;top:553px;width:1px;height:4px;background:#d8d8d8"></div>
<div style="left:901px;top:553px;width:1px;height:4px;background:#d8d8d8"></div>
<div style="left:961px;top:553px;width:1px;height:4px;background:#d8d8d8"></div>
<div style="left:1161px;top:553px;width:1px;height:4px;background:#e2c8cc"></div>
<div style="left:783px;top:280px;width:118px;height:20px;background:#b0c4de"></div>
<div class="t" style="left:787px;top:284px;transform:scaleX(1.0110);color:#111">Tomato</div>
<svg style="left:396px;top:287px" width="5" height="8" viewBox="0 0 5 8"><path d="M0 0 L4.5 4 L0 8 Z" fill="#606060"/></svg>
<div style="left:388px;top:557px;width:1011px;height:1px;background:#c8c8c8"></div>
<div style="left:1382px;top:280px;width:17px;height:277px;background:#e8e8e8"></div>
<div style="left:1382px;top:297px;width:17px;height:55px;background:#c8c8c8"></div>
<svg style="left:1387px;top:285px" width="8" height="7" viewBox="0 0 8 7"><path d="M0 4.3 L3.6 0 L7.2 4.3 L6 6 L3.6 3 L1.2 6 Z" fill="#6a6a6a"/></svg>
<svg style="left:1387px;top:546px" width="8" height="7" viewBox="0 0 8 7"><path d="M0 1.7 L1.2 0 L3.6 3 L6 0 L7.2 1.7 L3.6 6 Z" fill="#6a6a6a"/></svg>
<div style="left:388px;top:588px;width:1011px;height:17px;background:#e8e8e8"></div>
<div style="left:405px;top:588px;width:967px;height:17px;background:#cccccc"></div>
<svg style="left:393px;top:593px" width="7" height="8" viewBox="0 0 7 8"><path d="M6.5 1.2 L4.8 0 L0 3.6 L4.8 7.2 L6.5 6 L3 3.6 Z" fill="#6a6a6a"/></svg>
<svg style="left:1388px;top:593px" width="7" height="8" viewBox="0 0 7 8"><path d="M0 1.2 L1.7 0 L6.5 3.6 L1.7 7.2 L0 6 L3.5 3.6 Z" fill="#6a6a6a"/></svg>
<div style="left:690px;top:611px;width:2px;height:2px;background:#555"></div>
<div style="left:694px;top:611px;width:2px;height:2px;background:#555"></div>
<div style="left:698px;top:611px;width:2px;height:2px;background:#555"></div>
<div style="left:702px;top:611px;width:2px;height:2px;background:#555"></div>
<div style="left:706px;top:611px;width:2px;height:2px;background:#555"></div>
</body></html>
